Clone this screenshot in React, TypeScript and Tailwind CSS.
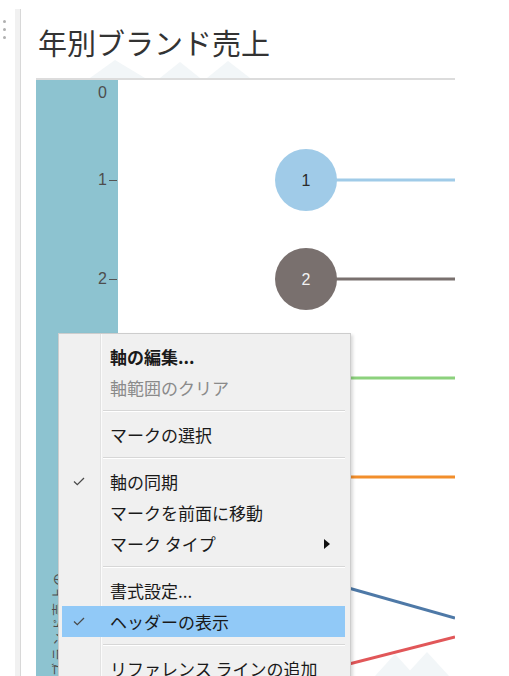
import React from 'react';

type MenuEntry =
  | { kind: 'item'; label: string; bold?: boolean; disabled?: boolean; checked?: boolean; active?: boolean; submenu?: boolean }
  | { kind: 'sep' };

const menuEntries: MenuEntry[] = [
  { kind: 'item', label: '軸の編集...', bold: true },
  { kind: 'item', label: '軸範囲のクリア', disabled: true },
  { kind: 'sep' },
  { kind: 'item', label: 'マークの選択' },
  { kind: 'sep' },
  { kind: 'item', label: '軸の同期', checked: true },
  { kind: 'item', label: 'マークを前面に移動' },
  { kind: 'item', label: 'マーク タイプ', submenu: true },
  { kind: 'sep' },
  { kind: 'item', label: '書式設定...' },
  { kind: 'item', label: 'ヘッダーの表示', checked: true, active: true },
  { kind: 'sep' },
  { kind: 'item', label: 'リファレンス ラインの追加' },
];

// rank lines: start y at the circle, end y at the right edge of the plot
const series = [
  { rank: 1, color: '#a0cbe8', label: '#2b2b2b', y1: 100, y2: 100, showLabel: true },
  { rank: 2, color: '#79706e', label: '#f2f2f2', y1: 199, y2: 199, showLabel: true },
  { rank: 3, color: '#8cd17d', label: '#2b2b2b', y1: 298, y2: 298, showLabel: true },
  { rank: 4, color: '#f28e2b', label: '#ffffff', y1: 397, y2: 397, showLabel: true },
  { rank: 5, color: '#4e79a7', label: '#ffffff', y1: 496, y2: 538, showLabel: true },
  { rank: 6, color: '#e15759', label: '#ffffff', y1: 595, y2: 557, showLabel: false },
];

const ticks = [
  { label: '0', top: 4, tick: false },
  { label: '1', top: 91, tick: true },
  { label: '2', top: 190, tick: true },
];

const CheckMark = () => (
  <svg width="12" height="9" viewBox="0 0 12 9">
    <path d="M1 4.5 L4.3 7.6 L11 1" fill="none" stroke="#4a4a4a" strokeWidth="1.3" />
  </svg>
);

const ContextMenu = () => (
  <div className="absolute left-[58px] top-[333px] w-[293px] h-[360px] bg-[#f0f0f0] border border-[#cdcdcd] shadow-[2px_2px_3px_rgba(0,0,0,0.15)] pt-[7px] font-['Noto_Sans_CJK_JP',sans-serif] text-[17px] text-[#1a1a1a]">
    <div className="absolute left-[41px] top-0 bottom-0 w-[2px] border-l border-[#e2e2e2] bg-white/70" />
    {menuEntries.map((entry, i) =>
      entry.kind === 'sep' ? (
        <div key={i} className="relative ml-[44px] mr-[5px] my-[7px] h-[2px] border-t border-[#d7d7d7] border-b border-b-white" />
      ) : (
        <div
          key={i}
          className={`relative ml-[3px] mr-[5px] h-[31px] flex items-center ${entry.active ? 'bg-[#91c9f7]' : ''}`}
        >
          <div className="w-[34px] flex justify-center">{entry.checked && <CheckMark />}</div>
          <span
            className={`ml-[14px] leading-none ${entry.bold ? 'font-bold' : ''} ${entry.disabled ? 'text-[#8a8a8a]' : ''}`}
          >
            {entry.label}
          </span>
          {entry.submenu && (
            <svg className="ml-auto mr-[15px]" width="6" height="10" viewBox="0 0 6 10">
              <path d="M0 0 L6 5 L0 10 Z" fill="#111" />
            </svg>
          )}
        </div>
      )
    )}
  </div>
);

export default function App() {
  return (
    <div className="relative w-[509px] h-[676px] bg-white overflow-hidden flex">
      {/* faint watermark peaks */}
      <svg className="absolute left-[85px] top-[58px] pointer-events-none" width="180" height="20" viewBox="0 0 180 20">
        <path d="M5 20 L30 2 L60 20 Z M75 20 L95 4 L115 20 Z M122 20 L143 3 L165 20 Z" fill="#f2f6f8" />
      </svg>
      <svg className="absolute left-[375px] top-[648px] pointer-events-none" width="80" height="28" viewBox="0 0 80 28">
        <path d="M0 28 L20 6 L40 28 Z M30 28 L52 4 L74 28 Z" fill="#f2f6f8" />
      </svg>

      <div className="w-[15px] pt-[20px] flex flex-col items-center gap-[5px] pr-[7px]">
        <span className="w-[3px] h-[3px] rounded-full bg-[#b0b0b0]" />
        <span className="w-[3px] h-[3px] rounded-full bg-[#b0b0b0]" />
        <span className="w-[3px] h-[3px] rounded-full bg-[#b0b0b0]" />
      </div>
      <div className="mt-[9px] w-[6px] bg-[#f1f1f1] border-r border-[#d8d8d8]" />

      <div className="relative flex flex-col pl-[15px]">
        <h1 className="relative pt-[23px] pl-[2px] h-[78px] text-[29px] leading-[38px] text-[#333] font-['Noto_Sans_CJK_JP',sans-serif]">
          年別ブランド売上
        </h1>
        <div className="flex w-[419px] flex-1 border-t-2 border-[#dcdcdc]">
          <div className="relative w-[82px] bg-[#8dc3d0] font-['Liberation_Sans',sans-serif] text-[16px] text-[#4d4d4d]">
            {ticks.map((t) => (
              <div key={t.label} className="absolute right-0 flex items-center" style={{ top: t.top }}>
                <span className="leading-[18px]">{t.label}</span>
                <span className={`ml-[2px] w-[8px] h-px ${t.tick ? 'bg-[#555]' : ''} mr-px`} />
              </div>
            ))}
            <div className="absolute left-[12px] top-[488px] [writing-mode:vertical-rl] [text-orientation:sideways] rotate-180 text-[13px] tracking-[2px] text-[#4d4d4d] font-['Noto_Sans_CJK_JP',sans-serif]">
              ブランド売上のランク
            </div>
          </div>
          <svg width="337" height="596" viewBox="0 0 337 596" className="block">
            {series.map((s) => (
              <g key={s.rank}>
                <line x1={188} y1={s.y1} x2={337} y2={s.y2} stroke={s.color} strokeWidth="3" />
                <circle cx={188} cy={s.y1} r={31} fill={s.color} />
                {s.showLabel && (
                  <text
                    x={188}
                    y={s.y1 + 6}
                    textAnchor="middle"
                    fontSize="16"
                    fontFamily="Liberation Sans, sans-serif"
                    fill={s.label}
                  >
                    {s.rank}
                  </text>
                )}
              </g>
            ))}
          </svg>
        </div>
      </div>

      <ContextMenu />
    </div>
  );
}
